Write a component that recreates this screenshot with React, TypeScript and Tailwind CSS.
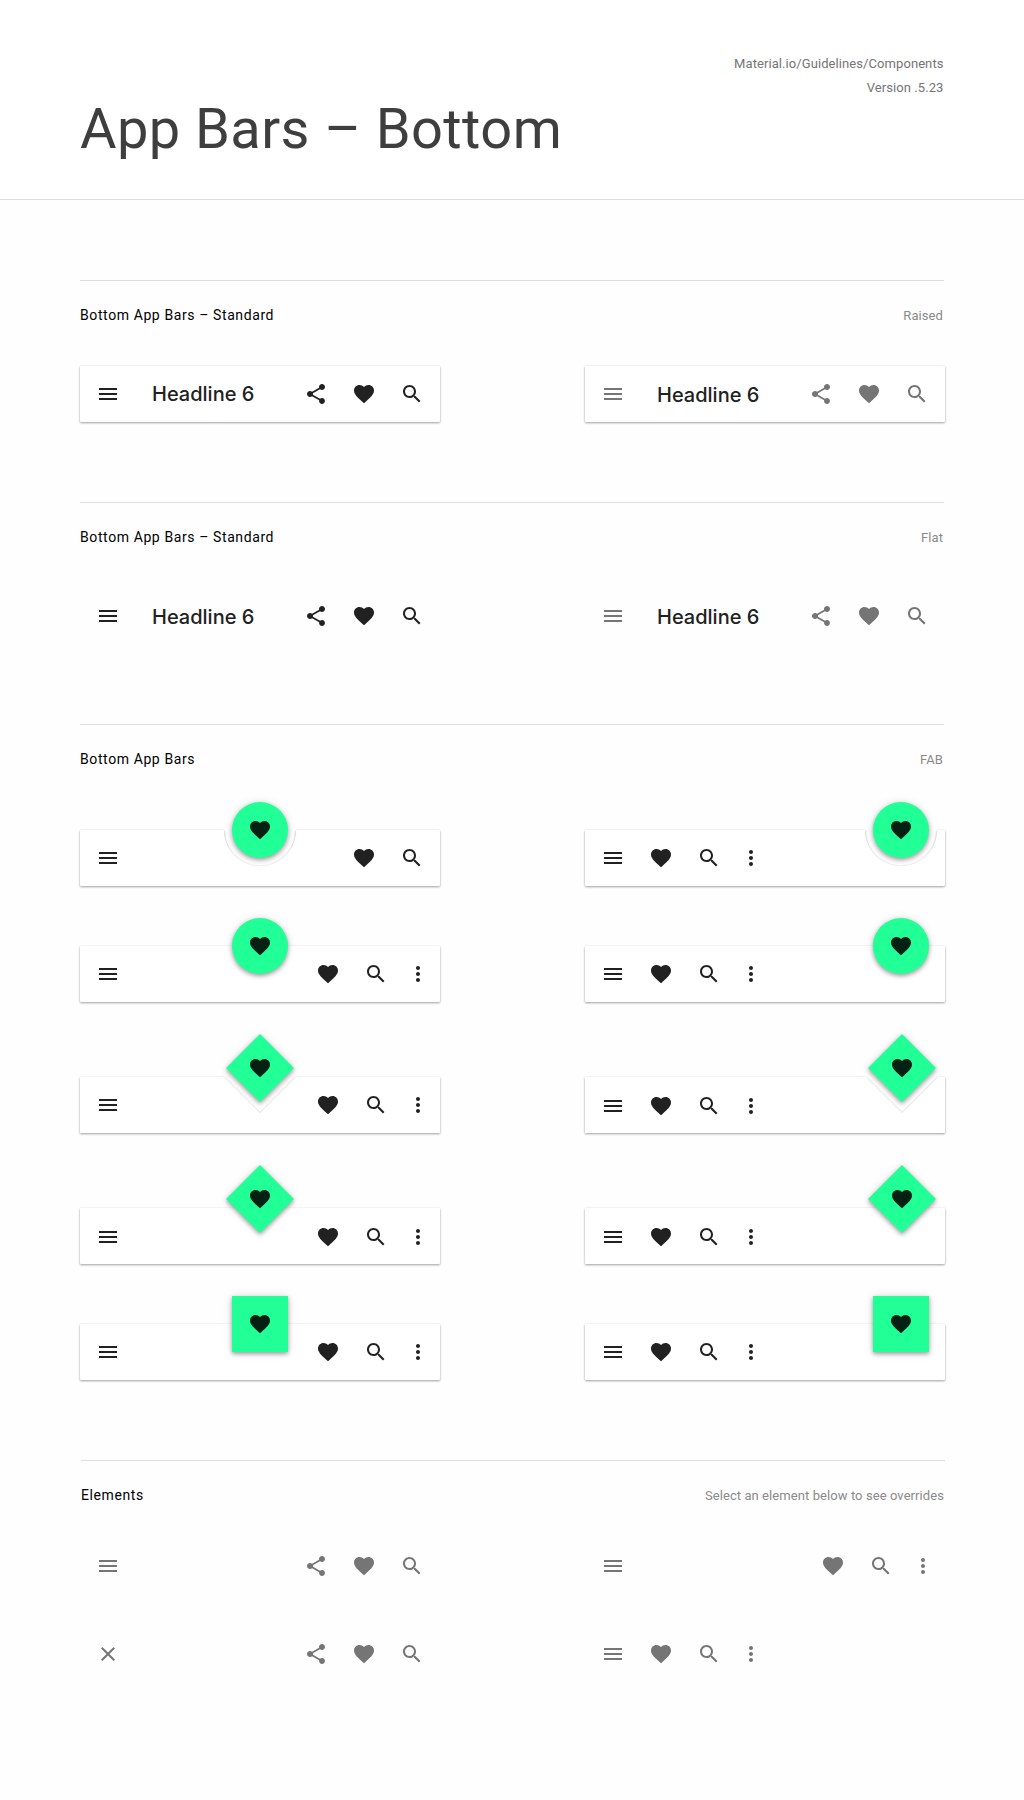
import type { ReactNode } from 'react';

const ICONS = {
  menu: 'M3 18h18v-2H3v2zm0-5h18v-2H3v2zm0-7v2h18V6H3z',
  share:
    'M18 16.08c-.76 0-1.44.3-1.96.77L8.91 12.7c.05-.23.09-.46.09-.7s-.04-.47-.09-.7l7.05-4.11c.54.5 1.25.81 2.04.81 1.66 0 3-1.34 3-3s-1.34-3-3-3-3 1.34-3 3c0 .24.04.47.09.7L8.04 9.81C7.5 9.31 6.79 9 6 9c-1.66 0-3 1.34-3 3s1.34 3 3 3c.79 0 1.5-.31 2.04-.81l7.12 4.16c-.05.21-.08.43-.08.65 0 1.61 1.31 2.92 2.92 2.92 1.61 0 2.92-1.31 2.92-2.92s-1.31-2.92-2.92-2.92z',
  heart:
    'M12 21.35l-1.45-1.32C5.4 15.36 2 12.28 2 8.5 2 5.42 4.42 3 7.5 3c1.74 0 3.41.81 4.5 2.09C13.09 3.81 14.76 3 16.5 3 19.58 3 22 5.42 22 8.5c0 3.78-3.4 6.86-8.55 11.54L12 21.35z',
  search:
    'M15.5 14h-.79l-.28-.27C15.41 12.59 16 11.11 16 9.5 16 5.91 13.09 3 9.5 3S3 5.91 3 9.5 5.91 16 9.5 16c1.61 0 3.09-.59 4.23-1.57l.27.28v.79l5 4.99L20.49 19l-4.99-5zm-6 0C7.01 14 5 11.99 5 9.5S7.01 5 9.5 5 14 7.01 14 9.5 11.99 14 9.5 14z',
  more: 'M12 8c1.1 0 2-.9 2-2s-.9-2-2-2-2 .9-2 2 .9 2 2 2zm0 2c-1.1 0-2 .9-2 2s.9 2 2 2 2-.9 2-2-.9-2-2-2zm0 6c-1.1 0-2 .9-2 2s.9 2 2 2 2-.9 2-2-.9-2-2-2z',
  close:
    'M19 6.41L17.59 5 12 10.59 6.41 5 5 6.41 10.59 12 5 17.59 6.41 19 12 13.41 17.59 19 19 17.59 13.41 12z',
};

type IconName = keyof typeof ICONS;
type FabShape = 'circle' | 'diamond' | 'square';
type Side = 'center' | 'end';

function Icon({ name }: { name: IconName }) {
  return (
    <svg viewBox="0 0 24 24" className="block size-6 shrink-0 fill-current">
      <path d={ICONS[name]} />
    </svg>
  );
}

function IconRow({ names }: { names: IconName[] }) {
  return (
    <div className="flex items-center gap-6">
      {names.map((n) => (
        <div key={n} className={n === 'more' ? '-ml-1.5' : ''}>
          <Icon name={n} />
        </div>
      ))}
    </div>
  );
}

function Fab({ shape, side }: { shape: FabShape; side: Side }) {
  const place =
    shape === 'diamond'
      ? side === 'center'
        ? 'left-[152px] -top-[37px]'
        : 'left-[289px] -top-[37px]'
      : side === 'center'
        ? 'left-[152px] -top-7'
        : 'left-[288px] -top-7';
  const face = {
    circle: 'inset-0 rounded-full',
    diamond: 'inset-[4px] rotate-45',
    square: 'inset-0',
  }[shape];
  return (
    <div
      className={`absolute grid size-14 place-items-center drop-shadow-[0_2px_2px_rgba(0,0,0,0.34)] ${place}`}
    >
      <div className={`absolute bg-[#21ff97] shadow-[0_0_10px_rgba(0,0,0,0.1)] ${face}`} />
      <div className="relative text-black/87">
        <Icon name="heart" />
      </div>
    </div>
  );
}

const SURFACES: Record<string, string> = {
  plain: 'rounded-[1px]',
  'circle-center':
    'rounded-[1px] [mask-image:radial-gradient(circle_at_180px_0px,transparent_35.5px,black_36.5px)]',
  'circle-end':
    'rounded-[1px] [mask-image:radial-gradient(circle_at_316px_0px,transparent_35.5px,black_36.5px)]',
  'diamond-center':
    '[clip-path:polygon(0_0,144px_0,180px_36px,216px_0,100%_0,100%_100%,0_100%)]',
  'diamond-end':
    '[clip-path:polygon(0_0,281px_0,317px_36px,353px_0,100%_0,100%_100%,0_100%)]',
};

interface BarProps {
  lead?: IconName[];
  trail?: IconName[];
  title?: 'high' | 'low';
  muted?: boolean;
  raised?: boolean;
  fab?: FabShape;
  side?: Side;
  notch?: boolean;
  nudge?: boolean;
}

function Bar({
  lead = ['menu'],
  trail = [],
  title,
  muted,
  raised,
  fab,
  side = 'center',
  notch,
  nudge,
}: BarProps) {
  const surface = SURFACES[notch && fab ? `${fab}-${side}` : 'plain'];
  const dotsLast = trail[trail.length - 1] === 'more';
  return (
    <div className="relative h-14 w-[360px]">
      {raised && (
        <div className="absolute inset-0 drop-shadow-[0_1px_1px_rgba(0,0,0,0.36)]">
          <div className="size-full drop-shadow-[0_0_1px_rgba(0,0,0,0.05)]">
            <div className={`size-full bg-white ${surface}`} />
          </div>
        </div>
      )}
      <div
        className={`relative flex h-full items-center pl-4 ${dotsLast ? 'pr-2.5' : 'pr-4'} ${
          nudge ? 'pt-0.5' : ''
        } ${muted ? 'text-[#757575]' : 'text-[#212121]'}`}
      >
        <IconRow names={lead} />
        {title && (
          <span
            className={`ml-8 font-['Inter',sans-serif] text-xl leading-6 font-medium text-[#212121] ${
              title === 'low' ? 'pt-0.5' : ''
            }`}
          >
            Headline 6
          </span>
        )}
        <div className="ml-auto">
          <IconRow names={trail} />
        </div>
      </div>
      {fab && <Fab shape={fab} side={side} />}
    </div>
  );
}

function Section({
  title,
  note,
  className,
  children,
}: {
  title: string;
  note: string;
  className: string;
  children: ReactNode;
}) {
  return (
    <section className={`w-[864px] border-t border-[#dedede] pt-[22px] ${className}`}>
      <div className="flex h-6 items-baseline justify-between pr-px">
        <h2 className="text-sm leading-6 tracking-[0.6px] text-black">{title}</h2>
        <span className="text-[13px] leading-6 tracking-[0.08px] text-[#8a8a8a]">{note}</span>
      </div>
      {children}
    </section>
  );
}

function Pair({ className = '', children }: { className?: string; children: ReactNode }) {
  return <div className={`flex w-[865px] justify-between ${className}`}>{children}</div>;
}

const standard: IconName[] = ['share', 'heart', 'search'];
const overflow: IconName[] = ['heart', 'search', 'more'];
const leading: IconName[] = ['menu', 'heart', 'search', 'more'];

export default function App() {
  return (
    <div className="h-[1800px] w-[1024px] overflow-hidden bg-[#fefefe] font-['Roboto',sans-serif]">
      <header className="flex h-[200px] justify-between border-b border-[#dedede] bg-white px-20">
        <h1 className="mt-[97px] text-[56px] leading-[64px] tracking-[0.42px] text-[#3e3e3e]">
          App Bars – Bottom
        </h1>
        <div className="mt-[52px] pr-[0.5px] text-right text-[13px] leading-6 tracking-[0.08px] text-[#757575]">
          <p>Material.io/Guidelines/Components</p>
          <p>Version .5.23</p>
        </div>
      </header>

      <main className="pt-20 pl-20">
        <Section title="Bottom App Bars – Standard" note="Raised" className="h-[222px]">
          <Pair className="mt-[39px]">
            <Bar raised title="high" trail={standard} />
            <Bar raised muted title="low" trail={standard} />
          </Pair>
        </Section>

        <Section title="Bottom App Bars – Standard" note="Flat" className="h-[222px]">
          <Pair className="mt-[39px]">
            <Bar title="low" trail={standard} />
            <Bar muted title="low" trail={standard} />
          </Pair>
        </Section>

        <Section title="Bottom App Bars" note="FAB" className="h-[736px]">
          <Pair className="mt-[59px]">
            <Bar raised notch fab="circle" trail={['heart', 'search']} />
            <Bar raised notch fab="circle" side="end" lead={leading} />
          </Pair>
          <Pair className="mt-[60px]">
            <Bar raised fab="circle" trail={overflow} />
            <Bar raised fab="circle" side="end" lead={leading} />
          </Pair>
          <Pair className="mt-[75px]">
            <Bar raised notch fab="diamond" trail={overflow} />
            <Bar raised notch nudge fab="diamond" side="end" lead={leading} />
          </Pair>
          <Pair className="mt-[75px]">
            <Bar raised nudge fab="diamond" trail={overflow} />
            <Bar raised nudge fab="diamond" side="end" lead={leading} />
          </Pair>
          <Pair className="mt-[60px]">
            <Bar raised fab="square" trail={overflow} />
            <Bar raised fab="square" side="end" lead={leading} />
          </Pair>
        </Section>

        <Section
          title="Elements"
          note="Select an element below to see overrides"
          className="ml-px"
        >
          <div className="-ml-px">
            <Pair className="mt-[31px]">
              <Bar muted trail={standard} />
              <Bar muted trail={overflow} />
            </Pair>
            <Pair className="mt-8">
              <Bar muted lead={['close']} trail={standard} />
              <Bar muted lead={leading} />
            </Pair>
          </div>
        </Section>
      </main>
    </div>
  );
}
